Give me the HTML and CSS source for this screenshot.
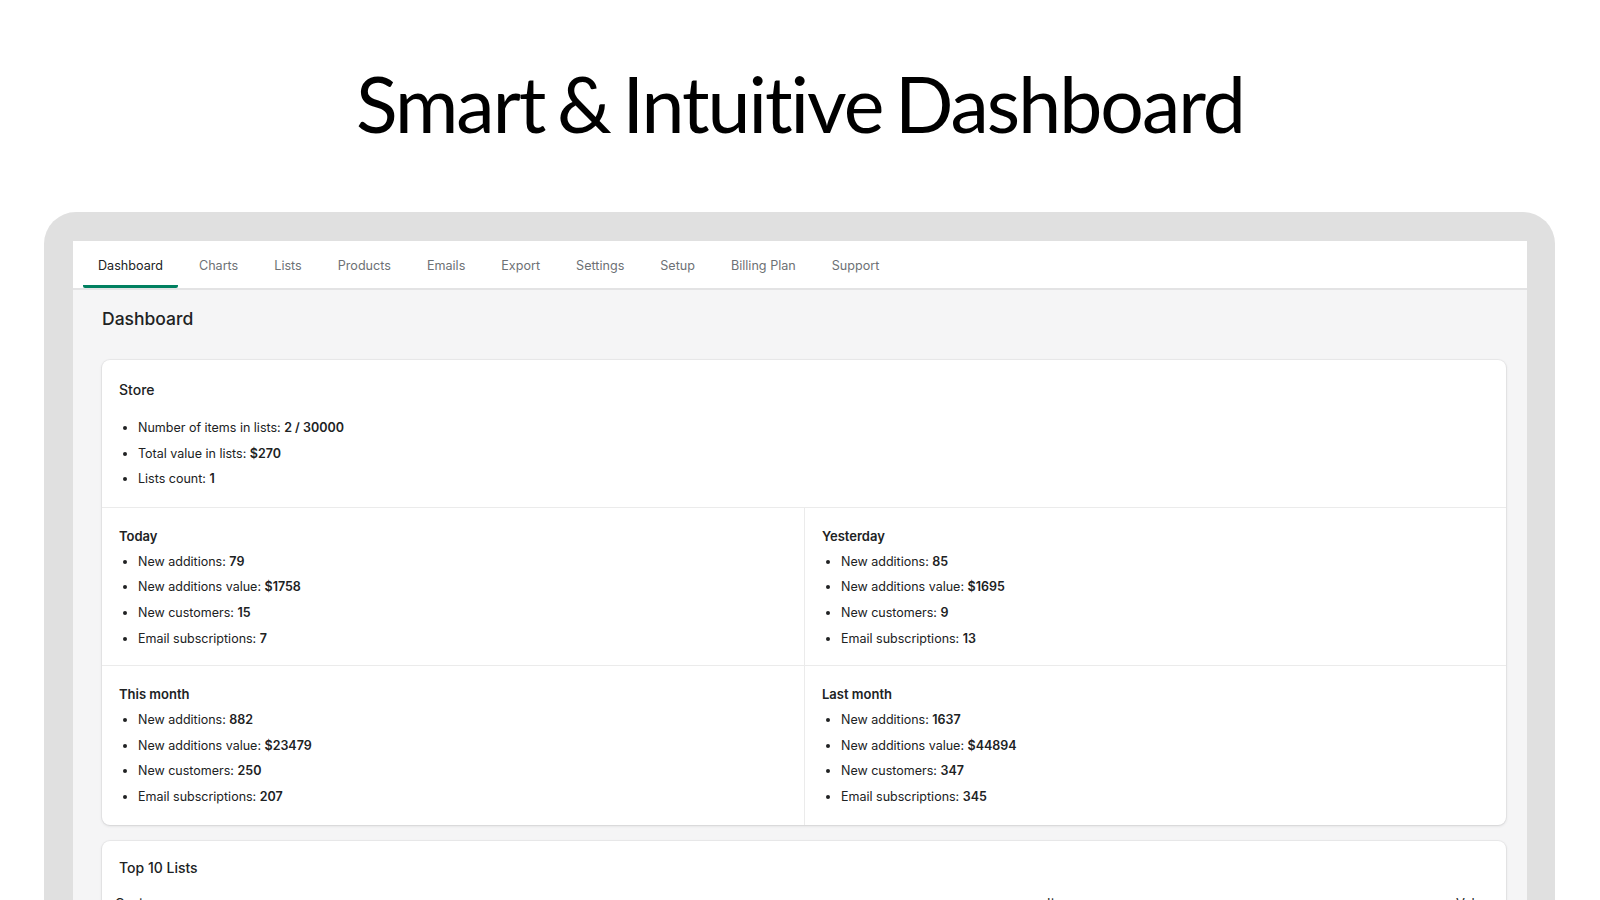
FILE: index.html
```html
<!DOCTYPE html>
<html lang="en">
<head>
    <meta charset="UTF-8">
    <meta name="viewport" content="width=device-width, initial-scale=1.0">
    <title>Smart &amp; Intuitive Dashboard</title>
    <link rel="stylesheet" href="styles.css">
</head>
<body>
    <header class="hero">
        <h1>Smart &amp; Intuitive Dashboard</h1>
    </header>

    <div class="device">
        <div class="screen">
            <nav class="tabs">
                <a class="tab active">Dashboard</a>
                <a class="tab">Charts</a>
                <a class="tab">Lists</a>
                <a class="tab">Products</a>
                <a class="tab">Emails</a>
                <a class="tab">Export</a>
                <a class="tab">Settings</a>
                <a class="tab">Setup</a>
                <a class="tab">Billing Plan</a>
                <a class="tab">Support</a>
            </nav>

            <main class="page">
                <h2 class="page-title">Dashboard</h2>

                <section class="card">
                    <div class="card-section store">
                        <h3 class="card-title">Store</h3>
                        <ul class="stats">
                            <li>Number of items in lists: <b>2 / 30000</b></li>
                            <li>Total value in lists: <b>$270</b></li>
                            <li>Lists count: <b>1</b></li>
                        </ul>
                    </div>

                    <div class="card-row">
                        <div class="card-section">
                            <h4 class="period">Today</h4>
                            <ul class="stats">
                                <li>New additions: <b>79</b></li>
                                <li>New additions value: <b>$1758</b></li>
                                <li>New customers: <b>15</b></li>
                                <li>Email subscriptions: <b>7</b></li>
                            </ul>
                        </div>
                        <div class="card-section">
                            <h4 class="period">Yesterday</h4>
                            <ul class="stats">
                                <li>New additions: <b>85</b></li>
                                <li>New additions value: <b>$1695</b></li>
                                <li>New customers: <b>9</b></li>
                                <li>Email subscriptions: <b>13</b></li>
                            </ul>
                        </div>
                    </div>

                    <div class="card-row">
                        <div class="card-section last">
                            <h4 class="period">This month</h4>
                            <ul class="stats">
                                <li>New additions: <b>882</b></li>
                                <li>New additions value: <b>$23479</b></li>
                                <li>New customers: <b>250</b></li>
                                <li>Email subscriptions: <b>207</b></li>
                            </ul>
                        </div>
                        <div class="card-section last">
                            <h4 class="period">Last month</h4>
                            <ul class="stats">
                                <li>New additions: <b>1637</b></li>
                                <li>New additions value: <b>$44894</b></li>
                                <li>New customers: <b>347</b></li>
                                <li>Email subscriptions: <b>345</b></li>
                            </ul>
                        </div>
                    </div>
                </section>

                <section class="card top-lists">
                    <h3 class="card-title">Top 10 Lists</h3>
                    <div class="table-head">
                        <span>Customer</span>
                        <span>Items</span>
                        <span>Value</span>
                    </div>
                </section>
            </main>
        </div>
    </div>
</body>
</html>
```

FILE: styles.css
```css
body {
    margin: 0;
    height: 900px;
    overflow: hidden;
    background: #fff;
    font-family: Inter, "Noto Sans", sans-serif;
    color: #202223;
}

.hero {
    height: 212px;
    padding-bottom: 7px;
    box-sizing: border-box;
    display: flex;
    align-items: center;
    justify-content: center;
}
.hero h1 {
    margin: 0;
    font-family: Lato, "Open Sans", sans-serif;
    font-weight: 400;
    font-size: 77px;
    letter-spacing: -2px;
    word-spacing: -5px;
    color: #000;
}

.device {
    margin: 0 45px 0 44px;
    height: 700px;
    padding: 29px 28px 0 29px;
    background: #e0e0e0;
    border-radius: 32px 32px 0 0;
}
.screen {
    height: 100%;
    background: #f5f5f6;
}

.tabs {
    display: flex;
    gap: 6px;
    height: 47px;
    padding-left: 10px;
    background: #fff;
    border-bottom: 2px solid #e3e3e4;
}
.tab {
    display: flex;
    align-items: center;
    box-sizing: border-box;
    height: 47px;
    padding: 4px 15px 0;
    border-bottom: 3px solid transparent;
    border-radius: 2px;
    font-size: 12.6px;
    color: #6d7175;
    cursor: pointer;
}
.tab.active {
    color: #202223;
    border-bottom-color: #008060;
}

.page {
    padding: 17px 21px 0 29px;
}
.page-title {
    margin: 0 0 29px;
    font-size: 17.5px;
    line-height: 24px;
    font-weight: 500;
}

.card {
    background: #fff;
    border-radius: 8px;
    box-shadow: 0 0 0 1px rgba(63, 63, 68, 0.05), 0 1px 3px rgba(63, 63, 68, 0.15);
}

.card-section {
    padding: 18px 17px 14px;
}
.card-section.store {
    padding: 20px 17px 15px;
}
.card-section.last {
    padding-bottom: 15px;
}
.card-row {
    display: grid;
    grid-template-columns: 1fr 1fr;
    border-top: 1px solid #ebebeb;
}
.card-row .card-section + .card-section {
    border-left: 1px solid #ebebeb;
}

.card-title {
    margin: 0 0 15px;
    font-size: 14px;
    line-height: 20px;
    font-weight: 500;
}
.period {
    margin: 0 0 3px;
    font-size: 13px;
    line-height: 20px;
    font-weight: 600;
}

.stats {
    margin: 0;
    padding-left: 19px;
    font-size: 12.5px;
    line-height: 25.6px;
}
.stats b { font-weight: 600; }

.top-lists {
    margin-top: 16px;
    padding: 17px 16px 20px 17px;
}
.top-lists .card-title {
    margin-bottom: 15px;
}
.table-head {
    display: grid;
    grid-template-columns: 932px 1fr auto;
    margin-left: -4px;
    font-size: 13px;
    line-height: 20px;
}
```
